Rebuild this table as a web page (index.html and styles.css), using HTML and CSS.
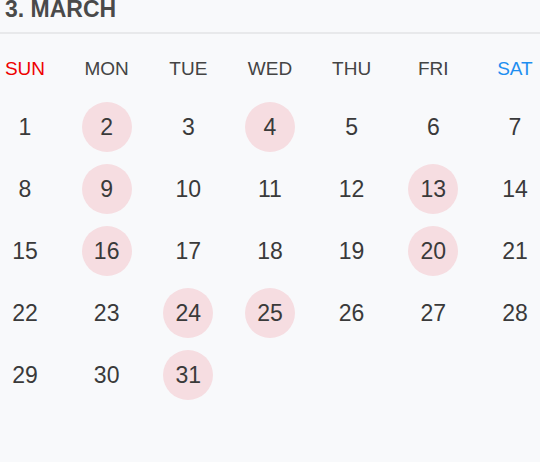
FILE: index.html
```html
<!DOCTYPE html>
<html>
<head>
<meta charset="utf-8">
<link rel="stylesheet" href="styles.css">
</head>
<body>
<div class="cal">
  <div class="title">3. MARCH</div>
  <div class="week">
    <div class="wd sun">SUN</div>
    <div class="wd">MON</div>
    <div class="wd">TUE</div>
    <div class="wd">WED</div>
    <div class="wd">THU</div>
    <div class="wd">FRI</div>
    <div class="wd sat">SAT</div>
  </div>
  <div class="days">
    <div class="d">1</div><div class="d on">2</div><div class="d">3</div><div class="d on">4</div><div class="d">5</div><div class="d">6</div><div class="d">7</div>
    <div class="d">8</div><div class="d on">9</div><div class="d">10</div><div class="d">11</div><div class="d">12</div><div class="d on">13</div><div class="d">14</div>
    <div class="d">15</div><div class="d on">16</div><div class="d">17</div><div class="d">18</div><div class="d">19</div><div class="d on">20</div><div class="d">21</div>
    <div class="d">22</div><div class="d">23</div><div class="d on">24</div><div class="d on">25</div><div class="d">26</div><div class="d">27</div><div class="d">28</div>
    <div class="d">29</div><div class="d">30</div><div class="d on">31</div>
  </div>
</div>
</body>
</html>
```
FILE: styles.css
```css
html, body {
  margin: 0;
  padding: 0;
  background: #f8f9fb;
  height: 100%;
}
body {
  font-family: "Liberation Sans", Arial, sans-serif;
}
.cal {
  width: 540px;
}
.title {
  font-size: 23px;
  font-weight: bold;
  line-height: 18px;
  color: #4a4a4a;
  padding: 0 0 14px 5px;
  border-bottom: 2px solid #e8e9eb;
}
.week {
  display: grid;
  grid-template-columns: repeat(7, 50px);
  justify-content: space-between;
  padding-top: 25px;
  margin-bottom: 23px;
}
.wd {
  font-size: 19px;
  line-height: 20px;
  text-align: center;
  color: #444;
  white-space: nowrap;
}
.wd.sun { color: #ee0000; }
.wd.sat { color: #1e8ef0; }
.days {
  display: grid;
  grid-template-columns: repeat(7, 50px);
  justify-content: space-between;
  row-gap: 12px;
}
.d {
  width: 50px;
  height: 50px;
  border-radius: 50%;
  display: flex;
  align-items: center;
  justify-content: center;
  font-size: 23px;
  color: #3a3a3a;
}
.d.on {
  background: #f6dde1;
}
```
